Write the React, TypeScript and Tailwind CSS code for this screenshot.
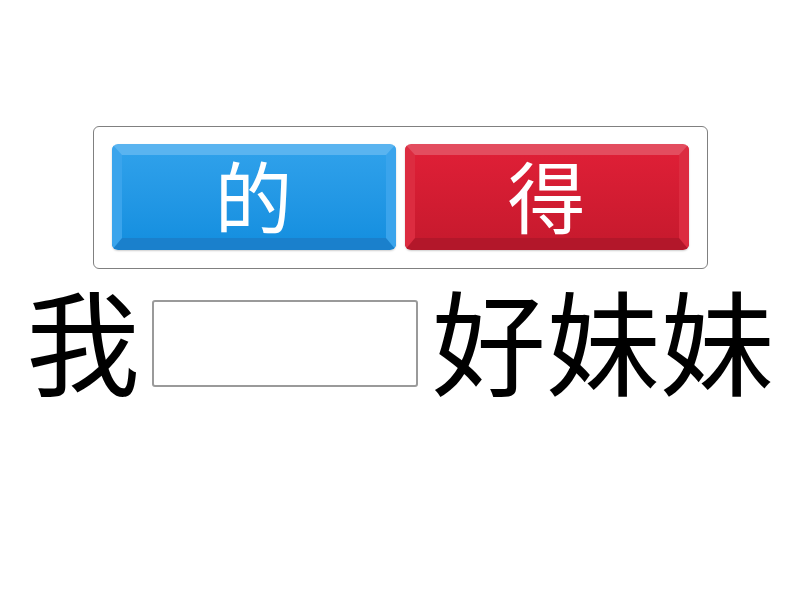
const cjk = { fontFamily: '"Noto Sans CJK SC", "Noto Sans", sans-serif' };

function Choice({ label, tone }: { label: string; tone: "blue" | "red" }) {
  const outer =
    tone === "blue"
      ? "border-t-[#5ab4f0] border-x-[#3aa4ec] border-b-[#1a80cc] bg-gradient-to-b from-[#2ea0ea] to-[#1690e0]"
      : "border-t-[#e34d5f] border-x-[#dc2c40] border-b-[#b3172a] bg-gradient-to-b from-[#de1f36] to-[#c81a2e]";
  return (
    <button
      className={`w-[284px] h-[106px] rounded-md border-x-[10px] border-t-[11px] border-b-[12px] flex items-center justify-center text-white text-[78px] leading-none shadow-[0_1px_2px_rgba(0,0,0,0.2)] ${outer}`}
      style={cjk}
    >
      <span className="mb-[4px]">{label}</span>
    </button>
  );
}

export default function App() {
  return (
    <div className="w-[800px] h-[600px] bg-white flex flex-col items-center" style={cjk}>
      <div className="mt-[126px] w-[615px] h-[143px] border-[1.5px] border-[#808080] rounded-md flex items-center justify-center gap-[9px] pb-[2px]">
        <Choice label="的" tone="blue" />
        <Choice label="得" tone="red" />
      </div>
      <div className="mt-[12px] flex items-start text-[114px] leading-none text-black">
        <span>我</span>
        <div className="mt-[19px] ml-[12px] mr-[14px] w-[266px] h-[87px] border-2 border-[#9a9a9a] rounded-[3px] bg-white" />
        <span>好妹妹</span>
      </div>
    </div>
  );
}
